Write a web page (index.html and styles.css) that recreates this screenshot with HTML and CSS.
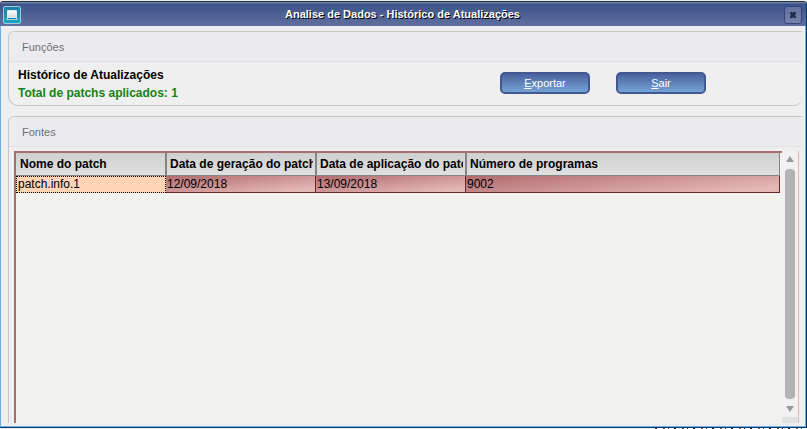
FILE: index.html
```html
<!DOCTYPE html>
<html lang="pt-BR">
<head>
<meta charset="utf-8">
<title>Analise de Dados - Histórico de Atualizações</title>
<link rel="stylesheet" href="styles.css">
</head>
<body>
<main class="window">
  <header class="titlebar">
    <svg class="app-icon" viewBox="0 0 18 18" aria-hidden="true">
      <defs>
        <linearGradient id="teal" x2="0" y2="1"><stop stop-color="#1b7fa3"/><stop offset="1" stop-color="#1ba5c6"/></linearGradient>
        <linearGradient id="screen" x2="0" y2="1"><stop stop-color="#fff"/><stop offset="1" stop-color="#d5dcdc"/></linearGradient>
      </defs>
      <rect x=".5" y=".5" width="17" height="17" rx="1.5" fill="url(#teal)" stroke="#a3cbdc"/>
      <path d="M4.500 4.500h9v7h-9z" fill="url(#screen)" stroke="#d9eaee"/>
      <path d="M4 12h10l1 2H3z" fill="#9fd0dd"/>
      <path d="M5 12h8v1H5z" fill="#1787a5"/>
    </svg>
    <h1 class="title">Analise de Dados - Histórico de Atualizações</h1>
    <button class="close" type="button" aria-label="Fechar">
      <svg viewBox="0 0 6 6" aria-hidden="true"><path d="M0 0h2l1 1 1-1h2v1L5 3l1 2v1H4L3 5 2 6H0V5l1-2-1-2z" fill="#1f2a4d"/></svg>
    </button>
  </header>
  <div class="content">
    <section class="panel functions">
      <h2 class="panel-title">Funções</h2>
      <div class="functions-body">
        <div class="summary">
          <p>Histórico de Atualizações</p>
          <p class="total">Total de patchs aplicados: 1</p>
        </div>
        <div class="actions">
          <button class="action" type="button"><u>E</u>xportar</button>
          <button class="action" type="button"><u>S</u>air</button>
        </div>
      </div>
    </section>
    <section class="panel sources">
      <h2 class="panel-title">Fontes</h2>
      <div class="grid-frame">
        <div class="grid-area">
          <table class="patches">
            <colgroup><col class="col-fixed"><col class="col-fixed"><col class="col-fixed"><col></colgroup>
            <thead>
              <tr><th><div class="label">Nome do patch</div></th><th><div class="label">Data de geração do patch</div></th><th><div class="label">Data de aplicação do patch</div></th><th><div class="label">Número de programas</div></th></tr>
            </thead>
            <tbody>
              <tr><td class="current">patch.info.1</td><td>12/09/2018</td><td>13/09/2018</td><td>9002</td></tr>
            </tbody>
          </table>
        </div>
        <div class="scrollbar" aria-hidden="true">
          <svg class="arrow" viewBox="0 0 8 6"><path d="M4 0l4 6H0z" fill="#999"/></svg>
          <div class="thumb"></div>
          <svg class="arrow" viewBox="0 0 8 6"><path d="M4 6l4-6H0z" fill="#999"/></svg>
          <div class="corner"></div>
        </div>
      </div>
    </section>
  </div>
</main>
<div class="backdrop-edge"></div>
</body>
</html>
```
FILE: styles.css
```css
* { box-sizing: border-box; }
body {
  display: flex;
  flex-direction: column;
  margin: 0;
  height: 100vh;
  padding: 1px 0 0;
  overflow: hidden;
  background: #e9f0ec;
  font-family: "Liberation Sans", Arial, sans-serif;
  font-size: 12px;
}
h1, h2, p { margin: 0; }
.window {
  display: flex;
  flex-direction: column;
  flex: 1;
  min-height: 0;
  border-right: 1px solid #00396b;
  border-bottom: 1px solid #00396b;
  border-radius: 3px 3px 0 0;
  background: #efefef;
}
/* Sliver of the window behind, showing below the frame */
.backdrop-edge {
  align-self: flex-end;
  flex: none;
  width: 152px;
  height: 1px;
  background: repeating-linear-gradient(90deg, #222 0 2px, #fff 2px 8px, #7a5030 8px 10px, #fff 10px 13px, #223a66 13px 14px, #fff 14px 19px);
}
.titlebar {
  display: grid;
  grid-template-columns: 18px 1fr 18px;
  align-items: center;
  flex: none;
  height: 25px;
  padding: 1px 4px 0 3px;
  border-top: 1px solid #27313d;
  border-radius: 3px 3px 0 0;
  background: linear-gradient(#6c7fa6 0 1px, #3d5289 2px, #60709f);
}
.app-icon { width: 18px; height: 18px; }
.title {
  padding-bottom: 2px;
  color: #fff;
  font-size: 11px;
  line-height: 14px;
  text-align: center;
  text-shadow: 1px 1px 0 #000;
}
.close {
  display: grid;
  place-items: center;
  width: 18px;
  height: 18px;
  padding: 0;
  border: 1px solid #34457c;
  border-radius: 3px;
  background: linear-gradient(#63739f, #7581aa);
}
.close svg { width: 6px; height: 6px; }
.content {
  display: flex;
  flex-direction: column;
  flex: 1;
  gap: 10px;
  min-height: 0;
  padding: 5px 3px 3px 7px;
  border: solid #6cb0ea;
  border-width: 0 1px 1px;
}
.panel {
  border: 1px solid #c6c6c6;
  border-right: 0;
}
.functions { border-radius: 6px 0 8px 10px; overflow: hidden; }
.sources {
  display: flex;
  flex-direction: column;
  flex: 1;
  min-height: 0;
  border-bottom: 0;
  border-radius: 6px 0 0 0;
}
.panel-title {
  height: 30px;
  padding: 1px 13px 0;
  border-bottom: 1px solid #e1e1e3;
  border-radius: 5px 0 0 0;
  background: #ebebf0;
  color: #707070;
  font-size: 11px;
  font-weight: 400;
  line-height: 29px;
}
.functions-body {
  display: flex;
  justify-content: space-between;
  height: 43px;
  padding: 4px 96px 0 9px;
}
.summary {
  font-size: 12px;
  font-weight: 700;
  line-height: 18px;
}
.total { color: #148214; }
.actions { display: flex; gap: 26px; padding-top: 6px; }
.action {
  width: 90px;
  height: 22px;
  padding: 0;
  border: 2px solid #435791;
  border-radius: 5px;
  background: linear-gradient(#4b62a0, #74a3d6);
  color: #fff;
  font: 11px/18px "Liberation Sans", Arial, sans-serif;
}
.grid-frame {
  display: flex;
  flex: 1;
  min-height: 0;
  margin: 4px 3px 0 5px;
  border-right: 1px solid #dfb5b5;
}
.grid-area {
  flex: 1;
  min-width: 0;
  padding-right: 2px;
  border: 2px solid #a86e6e;
  border-width: 2px 0 0 2px;
  background: #f2f2ee;
}
.patches {
  width: 100%;
  table-layout: fixed;
  border-collapse: separate;
  border-spacing: 0;
  color: #000;
}
.col-fixed { width: 150px; }
.patches th, .patches td {
  overflow: hidden;
  text-align: left;
  white-space: nowrap;
}
.patches th {
  height: 23px;
  padding: 0 2px 0 4px;
  border-right: 1px solid #858585;
  border-bottom: 1px solid #858585;
  background: linear-gradient(#d0d0d0, #e0e0e0);
}
.patches th + th { border-left: 1px solid #858585; padding-left: 3px; }
.label { overflow: hidden; line-height: 22px; }
.patches td {
  height: 17px;
  padding: 1px 1px 0;
  border-right: 1px solid #6f2428;
  border-bottom: 1px solid #6f2428;
  background: linear-gradient(174deg, #b16b6e, #e5b8b8 90%);
  line-height: 15px;
}
.patches .current {
  padding: 0 1px;
  border: 1px dotted #000;
  background: #ffd5b5;
}
.scrollbar {
  display: flex;
  flex-direction: column;
  align-items: center;
  flex: none;
  width: 16px;
  padding-top: 5px;
  background: #f1f1f1;
}
.arrow { flex: none; width: 8px; height: 6px; }
.thumb {
  flex: 1;
  width: 10px;
  margin: 7px 0;
  border-radius: 4px;
  background: #b2b2b2;
}
.corner {
  flex: none;
  width: 100%;
  height: 6px;
  margin-top: 5px;
  background: #e2e2e2;
}
```
